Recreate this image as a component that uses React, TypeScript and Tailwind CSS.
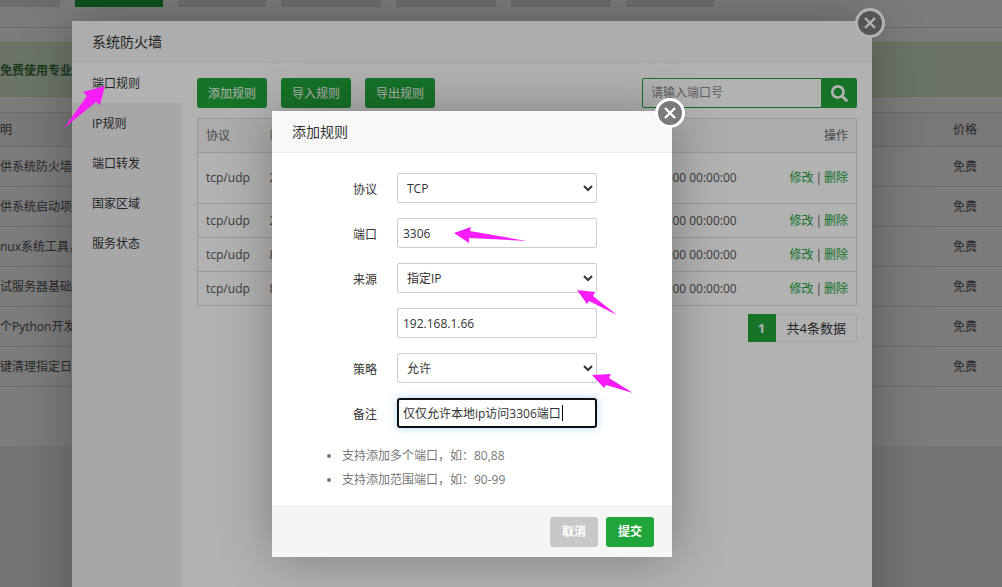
import type { ReactNode } from "react";
import { FaSearch } from "react-icons/fa";

const tabs = [
  { w: "w-[60px]", on: false },
  { w: "w-[88px]", on: true },
  { w: "w-[88px]", on: false },
  { w: "w-[100px]", on: false },
  { w: "w-[100px]", on: false },
  { w: "w-[100px]", on: false },
  { w: "w-[88px]", on: false },
];

const plugins = [
  "供系统防火墙",
  "供系统启动项",
  "nux系统工具，",
  "试服务器基础",
  "个Python开发",
  "键清理指定日志",
];

const menu = ["端口规则", "IP规则", "端口转发", "国家区域", "服务状态"];

const rules = [
  { port: "20", h: "h-[51px]" },
  { port: "22", h: "h-[34px]" },
  { port: "80", h: "h-[34px]" },
  { port: "888", h: "h-[34px]" },
];

const arrows = [
  "M105 86 L100 105 L96 102 L64 128 L87 96 L83 92 Z",
  "M454 233 L471 227 L470 231 L527 241 L469 238 L469 243 Z",
  "M577 290 L595 292 L593 296 L617 315 L589 301 L587 304 Z",
  "M592 375 L611 374 L609 378 L633 393 L606 385 L604 388 Z",
];

function CloseButton() {
  return (
    <button
      type="button"
      aria-label="关闭"
      className="absolute -top-[13px] -right-[13px] flex size-[30px] items-center justify-center rounded-full border-[3px] border-white bg-[#7a7a7a] text-white"
    >
      <svg viewBox="0 0 24 24" className="size-6" fill="none" stroke="currentColor" strokeWidth="2.4">
        <path d="M7 7 L17 17 M17 7 L7 17" />
      </svg>
    </button>
  );
}

function DialogTitle({ children }: { children: ReactNode }) {
  return (
    <h2 className="h-[42px] shrink-0 border-b border-[#eee] bg-[#f8f8f8] px-5 text-sm leading-[42px] text-[#333]">
      {children}
    </h2>
  );
}

function PluginPage() {
  return (
    <div className="bg-white pb-[59px]">
      <div className="flex h-7 items-start gap-[15px] border-b border-[#ddd]">
        {tabs.map((t, i) => (
          <span key={i} className={`h-[7px] ${t.w} ${t.on ? "bg-[#20a53a]" : "bg-[#e0e0e0]"}`} />
        ))}
      </div>
      <p className="mt-3.5 h-[55px] border-y border-[#d6e9c6] bg-[#dff0d8] font-bold leading-[55px] text-[#3c763d]">
        免费使用专业版
      </p>
      <table className="mt-[15px] w-full table-fixed border-t border-[#ddd] text-left">
        <thead>
          <tr className="h-[34px] border-b border-[#ddd] bg-[#f6f6f6]">
            <th className="font-normal">明</th>
            <th className="w-[49px] font-normal">价格</th>
          </tr>
        </thead>
        <tbody>
          {plugins.map((p) => (
            <tr key={p} className="h-10 border-b border-[#ddd]">
              <td>{p}</td>
              <td>免费</td>
            </tr>
          ))}
        </tbody>
      </table>
    </div>
  );
}

function FirewallPanel() {
  return (
    <div className="flex flex-1">
      <nav className="w-[110px] shrink-0 bg-[#f0f0f1]">
        {menu.map((m, i) => (
          <a key={m} href="#" className={`block h-10 pl-5 leading-[42px] text-[#333] ${i === 0 ? "bg-white" : ""}`}>
            {m}
          </a>
        ))}
      </nav>
      <div className="flex-1 p-[15px]">
        <div className="flex items-center justify-between">
          <div className="flex gap-3.5">
            {["添加规则", "导入规则", "导出规则"].map((b) => (
              <button
                key={b}
                type="button"
                className="h-[30px] w-[70px] rounded-[3px] bg-[#20a53a] leading-8 text-white"
              >
                {b}
              </button>
            ))}
          </div>
          <form className="flex h-[30px]">
            <input
              aria-label="请输入端口号"
              placeholder="请输入端口号"
              className="w-[180px] rounded-l-xs border border-[#20a53a] px-2 placeholder:text-[#8a8a8a]"
            />
            <button
              type="button"
              aria-label="搜索"
              className="flex w-[35px] items-center justify-center rounded-r-xs bg-[#20a53a] text-white"
            >
              <FaSearch className="size-[17px]" />
            </button>
          </form>
        </div>
        <table className="mt-2.5 w-full table-fixed border border-[#ddd] text-left">
          <thead>
            <tr className="h-[34px] border-b border-[#ddd] bg-[#f6f6f6] text-[#666]">
              <th className="w-16 px-2 font-normal">协议</th>
              <th className="px-2 font-normal">端口</th>
              <th className="w-[130px] px-2 font-normal">时间</th>
              <th className="w-[111px] px-2 text-right font-normal">操作</th>
            </tr>
          </thead>
          <tbody>
            {rules.map((r) => (
              <tr key={r.port} className={`border-b border-[#ddd] ${r.h}`}>
                <td className="px-2">tcp/udp</td>
                <td className="px-2">{r.port}</td>
                <td className="px-2 whitespace-nowrap">0000-00-00 00:00:00</td>
                <td className="px-2 text-right">
                  <a href="#" className="text-[#20a53a]">修改</a>
                  <span className="mx-0.5">|</span>
                  <a href="#" className="text-[#20a53a]">删除</a>
                </td>
              </tr>
            ))}
          </tbody>
        </table>
        <div className="mt-2 flex h-7 justify-end text-[13px] leading-[26px]">
          <span className="w-7 border border-[#20a53a] bg-[#20a53a] text-center font-bold text-white">1</span>
          <span className="border border-l-0 border-[#ececec] pr-2.5 pl-[11px] text-[#333]">共4条数据</span>
        </div>
      </div>
    </div>
  );
}

const field = "h-[30px] w-[200px] rounded-xs border border-[#ccc] bg-white text-[#333]";

function Row({ label, id, children }: { label?: string; id: string; children: ReactNode }) {
  return (
    <div className="flex h-[30px] items-center">
      <label htmlFor={id} className="w-[105px] pt-[3px] pr-5 text-right text-[#333]">
        {label}
      </label>
      {children}
    </div>
  );
}

function RuleForm() {
  return (
    <form>
      <div className="flex flex-col gap-[15px] px-5 pt-5">
        <Row label="协议" id="protocol">
          <select id="protocol" className={`${field} px-[5px]`}>
            <option>TCP</option>
          </select>
        </Row>
        <Row label="端口" id="port">
          <input id="port" defaultValue="3306" className={`${field} px-[5px]`} />
        </Row>
        <Row label="来源" id="source">
          <select id="source" className={`${field} px-[5px]`}>
            <option>指定IP</option>
          </select>
        </Row>
        <Row id="ip">
          <input id="ip" aria-label="指定IP" defaultValue="192.168.1.66" className={`${field} px-[5px]`} />
        </Row>
        <Row label="策略" id="policy">
          <select id="policy" className={`${field} px-[5px]`}>
            <option>允许</option>
          </select>
        </Row>
        <Row label="备注" id="remark">
          <span className="relative">
            <input
              id="remark"
              defaultValue="仅仅允许本地ip访问3306端口"
              className="h-[30px] w-[200px] rounded-[3px] border-2 border-[#101010] bg-white px-1 text-[#333] shadow-[0_0_8px_rgba(102,175,233,0.5)]"
            />
            <span className="absolute top-[7px] left-[165px] h-4 w-px bg-black" />
          </span>
        </Row>
      </div>
      <ul className="mt-4 mb-3.5 list-disc pl-[70px] leading-6 text-[#777]">
        <li>支持添加多个端口，如：80,88</li>
        <li>支持添加范围端口，如：90-99</li>
      </ul>
      <div className="flex justify-end gap-2 border-t border-[#edf1f2] bg-[#f4f6f6] py-2.5 pr-[18px] font-bold text-white">
        <button type="button" className="h-[30px] w-12 rounded-[3px] bg-[#c8c8c8]">取消</button>
        <button type="button" className="h-[30px] w-12 rounded-[3px] bg-[#20a53a]">提交</button>
      </div>
    </form>
  );
}

export default function App() {
  return (
    <main className="relative h-screen overflow-hidden bg-[#f1f1f1] font-['Open_Sans','Noto_Sans_CJK_SC',sans-serif] text-xs text-[#555]">
      <PluginPage />

      <div className="absolute inset-0 flex items-start justify-center bg-black/30 pt-[21px] pr-[58px]">
        <section
          role="dialog"
          aria-label="系统防火墙"
          className="relative flex min-h-[640px] w-[800px] flex-col bg-white shadow-[1px_1px_50px_rgba(0,0,0,0.3)]"
        >
          <DialogTitle>系统防火墙</DialogTitle>
          <FirewallPanel />
          <CloseButton />
        </section>
      </div>

      <div className="absolute inset-0 flex items-start justify-center bg-black/30 pt-[111px] pr-[58px]">
        <section
          role="dialog"
          aria-label="添加规则"
          className="relative w-[400px] bg-white shadow-[1px_1px_50px_rgba(0,0,0,0.3)]"
        >
          <DialogTitle>添加规则</DialogTitle>
          <RuleForm />
          <CloseButton />
        </section>
      </div>

      <svg className="pointer-events-none absolute top-0 left-0 size-full" fill="#f81cf8">
        {arrows.map((d) => (
          <path key={d} d={d} />
        ))}
      </svg>
    </main>
  );
}
